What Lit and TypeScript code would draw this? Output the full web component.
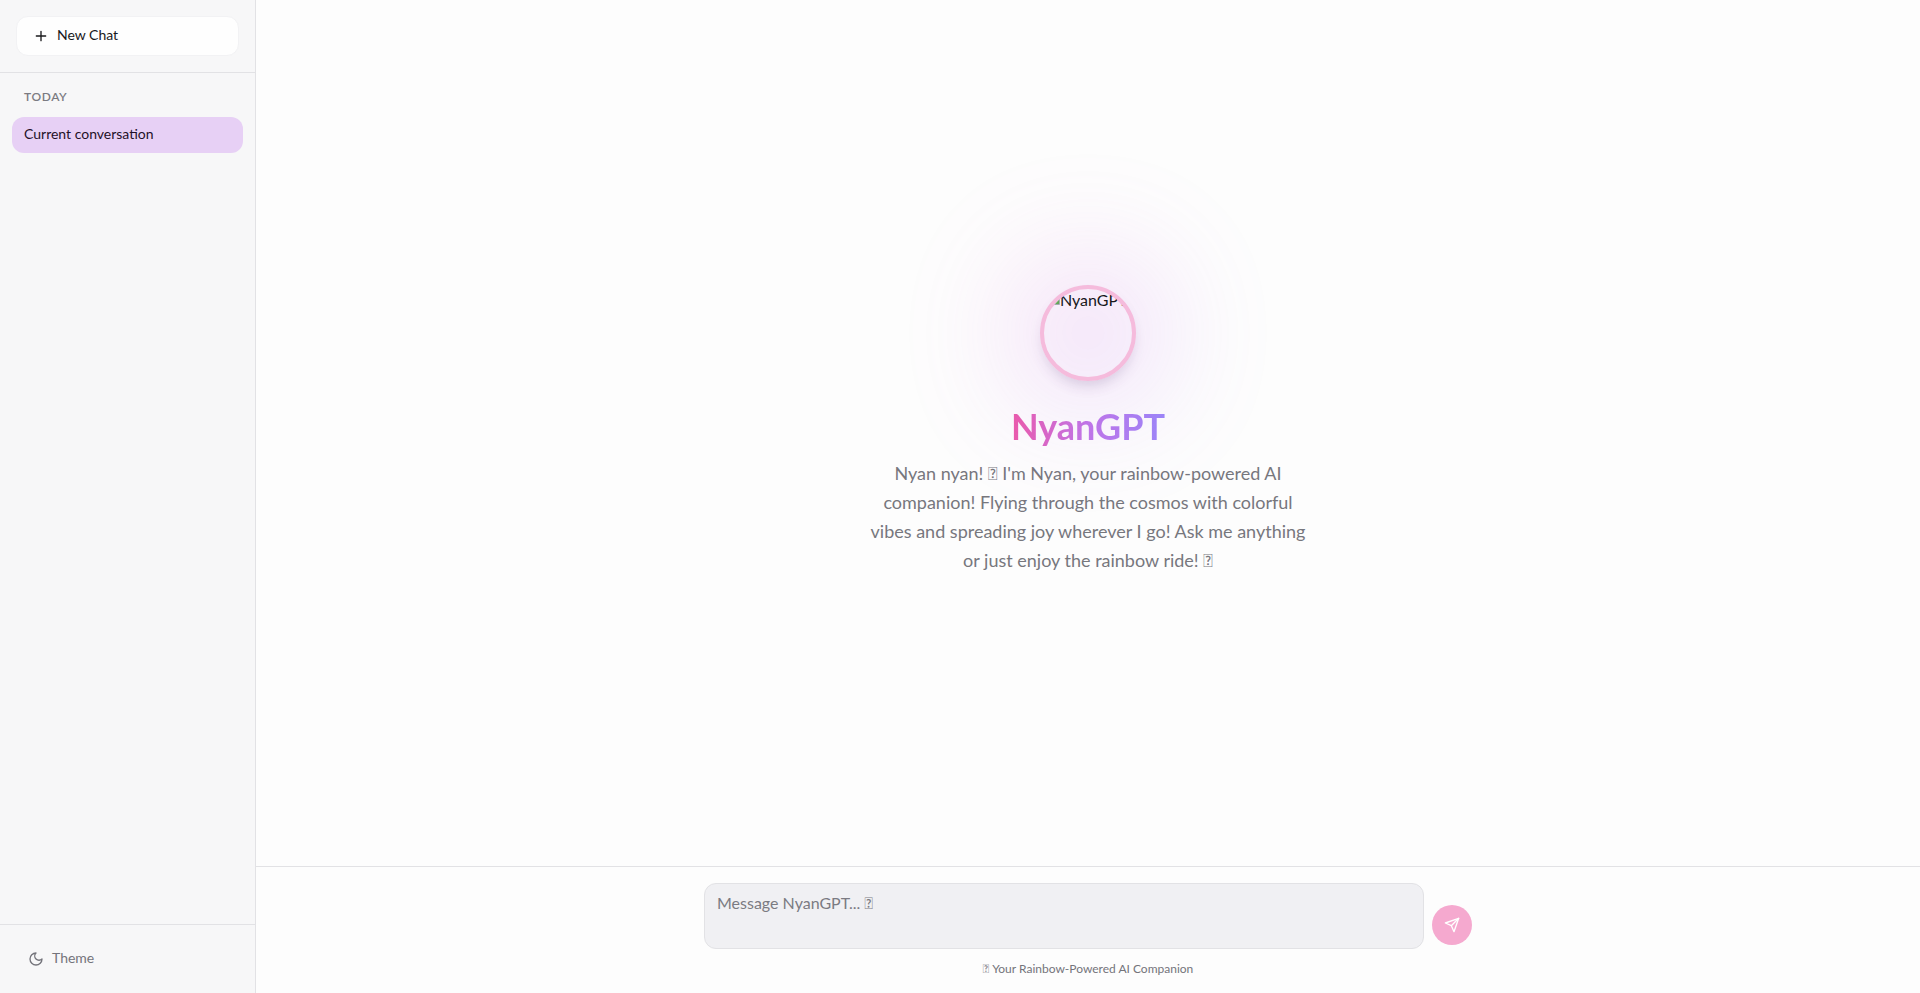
import { LitElement, html, css } from "lit";
import { customElement, state } from "lit/decorators.js";

const SYMBOL = "\u{10FFFD}";
const INTRO = `Nyan nyan! ${SYMBOL} I'm Nyan, your rainbow-powered AI companion! Flying through the cosmos with colorful vibes and spreading joy wherever I go! Ask me anything or just enjoy the rainbow ride! ${SYMBOL}`;
const NOTE = `${SYMBOL} Your Rainbow-Powered AI Companion`;

@customElement("app-root")
export class AppRoot extends LitElement {
  static styles = css`
    :host {
      display: flex;
      height: 100vh;
      background: #fdfdfd;
      color: #18181b;
      font-family: Lato, sans-serif;
      font-size: 16px;
      line-height: 22px;
    }
    * {
      box-sizing: border-box;
    }
    button,
    textarea {
      font: inherit;
      color: inherit;
      margin: 0;
    }
    svg {
      display: block;
      flex: none;
    }
    .sidebar {
      display: flex;
      flex-direction: column;
      flex: none;
      width: 256px;
      background: #f7f7f8;
      border-right: 1px solid #e2e2e5;
    }
    .top {
      padding: 16px;
      border-bottom: 1px solid #e2e2e5;
    }
    .new-chat {
      display: flex;
      align-items: center;
      gap: 8px;
      width: 100%;
      height: 40px;
      padding: 0 16px;
      border: 1px solid #f2f2f4;
      border-radius: 12px;
      background: #fefefe;
      font-size: 14px;
      line-height: 20px;
    }
    .label {
      padding-bottom: 2px;
    }
    .history {
      flex: 1;
      padding: 16px 12px;
    }
    .group {
      margin: 0 0 12px;
      padding: 0 12px;
      font-size: 12px;
      font-weight: 600;
      line-height: 16px;
      letter-spacing: 0.6px;
      color: #7b7b82;
    }
    .chat {
      display: block;
      padding: 7px 12px 9px;
      border-radius: 12px;
      background: #e7d0f5;
      color: #1f1028;
      font-size: 14px;
      line-height: 20px;
      text-decoration: none;
    }
    .bottom {
      padding: 16px;
      border-top: 1px solid #e2e2e5;
    }
    .theme {
      display: flex;
      align-items: center;
      gap: 8px;
      width: 100%;
      height: 36px;
      padding: 0 12px;
      border: 0;
      background: none;
      color: #74747b;
      font-size: 14px;
      line-height: 20px;
    }
    .main {
      display: flex;
      flex-direction: column;
      flex: 1;
      min-width: 0;
    }
    .welcome {
      display: flex;
      flex: 1;
      flex-direction: column;
      align-items: center;
      justify-content: center;
      padding: 16px 16px 22px;
      text-align: center;
    }
    .avatar {
      position: relative;
      width: 96px;
      height: 96px;
      margin-bottom: 24px;
    }
    .glow {
      position: absolute;
      inset: -28px;
      border-radius: 50%;
      background: linear-gradient(135deg, #f472b6, #c050e8, #8b7cf6);
      opacity: 0.2;
      filter: blur(60px);
    }
    .face {
      position: relative;
      display: flex;
      width: 96px;
      height: 96px;
      overflow: hidden;
      border: 4px solid #f5bbdc;
      border-radius: 50%;
      box-shadow: 0 8px 14px -4px rgba(80, 50, 110, 0.2);
      text-align: left;
    }
    h1 {
      margin: 0 0 12px;
      background: linear-gradient(90deg, #ec5aa9, #c076e8, #9b86f8);
      background-clip: text;
      -webkit-background-clip: text;
      color: transparent;
      font-size: 36px;
      font-weight: 700;
      line-height: 42px;
    }
    .intro {
      max-width: 448px;
      margin: 0;
      color: #77777d;
      font-size: 18px;
      line-height: 29px;
    }
    .composer {
      padding: 16px;
      border-top: 1px solid #e2e2e5;
    }
    form {
      display: flex;
      align-items: flex-end;
      gap: 8px;
      max-width: 768px;
      margin: 0 auto;
    }
    textarea {
      flex: 1;
      min-width: 0;
      height: 66px;
      padding: 8px 12px;
      border: 1px solid #e2e2e5;
      border-radius: 12px;
      background: #f0f0f3;
      resize: none;
      outline: none;
    }
    textarea::placeholder {
      color: #7b7b82;
      opacity: 1;
    }
    .send {
      display: grid;
      place-items: center;
      width: 40px;
      height: 40px;
      margin-bottom: 4px;
      padding: 0;
      border: 0;
      border-radius: 50%;
      background: #f5a9cf;
      color: #fff;
    }
    .note {
      margin: 12px 0 0;
      color: #74747b;
      font-size: 12px;
      line-height: 16px;
      text-align: center;
    }
  `;

  @state() private draft = "";

  render() {
    return html`
      <aside class="sidebar">
        <div class="top">
          <button class="new-chat" type="button">
            <svg width="16" height="16" viewBox="0 0 24 24" fill="none" stroke="currentColor" stroke-width="2" stroke-linecap="round" stroke-linejoin="round"><path d="M5 12h14M12 5v14" /></svg>
            <span class="label">New Chat</span>
          </button>
        </div>
        <nav class="history">
          <h2 class="group">TODAY</h2>
          <a class="chat" href="#current">Current conversation</a>
        </nav>
        <div class="bottom">
          <button class="theme" type="button">
            <svg width="16" height="16" viewBox="0 0 24 24" fill="none" stroke="currentColor" stroke-width="2" stroke-linecap="round" stroke-linejoin="round"><path d="M12 3a6 6 0 0 0 9 9 9 9 0 1 1-9-9Z" /></svg>
            <span class="label">Theme</span>
          </button>
        </div>
      </aside>
      <main class="main">
        <section class="welcome">
          <div class="avatar">
            <div class="glow"></div>
            <div class="face">
              <svg width="16" height="16" viewBox="0 0 16 16"><path d="M1.500 .5h10l4 4v11h-14z" fill="#eef1fa" stroke="#a5a8b0" /><path d="M2 15V13l4-5 3 3 6-3v7z" fill="#63a557" /></svg>
              <span>NyanGPT</span>
            </div>
          </div>
          <h1>NyanGPT</h1>
          <p class="intro">${INTRO}</p>
        </section>
        <footer class="composer">
          <form @submit=${(e: Event) => e.preventDefault()}>
            <textarea
              aria-label="Message NyanGPT"
              placeholder="Message NyanGPT... ${SYMBOL}"
              .value=${this.draft}
              @input=${(e: Event) => (this.draft = (e.target as HTMLTextAreaElement).value)}
            ></textarea>
            <button class="send" type="submit" aria-label="Send message">
              <svg width="16" height="16" viewBox="0 0 24 24" fill="none" stroke="currentColor" stroke-width="2" stroke-linecap="round" stroke-linejoin="round"><path d="m22 2-7 20-4-9-9-4Z" /><path d="M22 2 11 13" /></svg>
            </button>
          </form>
          <p class="note">${NOTE}</p>
        </footer>
      </main>
    `;
  }
}
